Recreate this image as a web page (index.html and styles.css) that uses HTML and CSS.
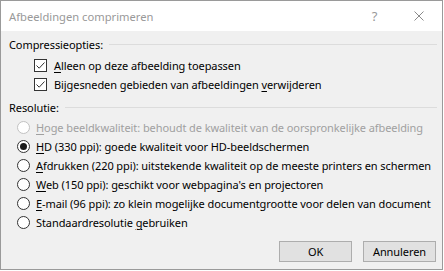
FILE: index.html
```html
<!DOCTYPE html>
<html lang="nl">
<head>
    <meta charset="UTF-8">
    <title>Afbeeldingen comprimeren</title>
    <link rel="stylesheet" href="styles.css">
</head>
<body>
    <div class="window">
        <div class="titlebar">
            <span class="title">Afbeeldingen comprimeren</span>
            <span class="caption-btn help">?</span>
            <span class="caption-btn close">
                <svg width="10" height="10" viewBox="0 0 10 10">
                    <path d="M0.5 0.5 L9.5 9.5 M9.5 0.5 L0.5 9.5" stroke="#8a8a8a" stroke-width="1" fill="none"/>
                </svg>
            </span>
        </div>

        <div class="content">
            <!-- Compressieopties -->
            <div class="group-header">
                <span>Compressieopties:</span>
                <span class="group-line"></span>
            </div>
            <div class="check-row first">
                <span class="checkbox">
                    <svg width="11" height="11" viewBox="0 0 11 11">
                        <path d="M1.5 5.5 L4.2 8.2 L9.5 2.5" stroke="#333" stroke-width="1" fill="none"/>
                    </svg>
                </span>
                <span><u>A</u>lleen op deze afbeelding toepassen</span>
            </div>
            <div class="check-row">
                <span class="checkbox">
                    <svg width="11" height="11" viewBox="0 0 11 11">
                        <path d="M1.5 5.5 L4.2 8.2 L9.5 2.5" stroke="#333" stroke-width="1" fill="none"/>
                    </svg>
                </span>
                <span>Bijgesneden gebieden van afbeeldingen <u>v</u>erwijderen</span>
            </div>

            <!-- Resolutie -->
            <div class="group-header second">
                <span>Resolutie:</span>
                <span class="group-line"></span>
            </div>
            <div class="radio-row first disabled">
                <span class="radio"></span>
                <span><u>H</u>oge beeldkwaliteit: behoudt de kwaliteit van de oorspronkelijke afbeelding</span>
            </div>
            <div class="radio-row">
                <span class="radio checked"></span>
                <span><u>H</u>D (330 ppi): goede kwaliteit voor HD-beeldschermen</span>
            </div>
            <div class="radio-row">
                <span class="radio"></span>
                <span><u>A</u>fdrukken (220 ppi): uitstekende kwaliteit op de meeste printers en schermen</span>
            </div>
            <div class="radio-row">
                <span class="radio"></span>
                <span><u>W</u>eb (150 ppi): geschikt voor webpagina's en projectoren</span>
            </div>
            <div class="radio-row">
                <span class="radio"></span>
                <span><u>E</u>-mail (96 ppi): zo klein mogelijke documentgrootte voor delen van document</span>
            </div>
            <div class="radio-row">
                <span class="radio"></span>
                <span>Standaardresolutie <u>g</u>ebruiken</span>
            </div>

            <div class="buttons">
                <button>OK</button>
                <button>Annuleren</button>
            </div>
        </div>
    </div>
</body>
</html>
```
FILE: styles.css
```css
/* Algemeen */
body {
    margin: 0;
    background: #ffffff;
    font-family: "Noto Sans", sans-serif;
    font-size: 11px;
    letter-spacing: -0.08px;
    color: #000;
}

/* Venster */
.window {
    width: 443px;
    height: 270px;
    box-sizing: border-box;
    border: 1px solid #9a9a9a;
    display: flex;
    flex-direction: column;
}

/* Titelbalk */
.titlebar {
    height: 30px;
    background: #ffffff;
    display: flex;
    align-items: center;
}

.title {
    flex: 1;
    padding-left: 8px;
    color: #999999;
    font-size: 11.2px;
    letter-spacing: 0;
    white-space: nowrap;
}

.caption-btn {
    width: 46px;
    height: 30px;
    display: flex;
    align-items: center;
    justify-content: center;
    color: #999999;
    flex-shrink: 0;
}

.help {
    font-size: 13px;
    padding-left: 3px;
    box-sizing: border-box;
}

/* Inhoud */
.content {
    flex: 1;
    background: #f0f0f0;
    padding: 4px 6px 7px 8px;
    display: flex;
    flex-direction: column;
}

.group-header {
    height: 19px;
    display: flex;
    align-items: center;
    white-space: nowrap;
}

.group-header.second {
    margin-top: 4px;
}

.group-line {
    flex: 1;
    height: 1px;
    background: #dcdcdc;
    margin-left: 6px;
    margin-right: -1px;
}

/* Selectievakjes */
.check-row {
    height: 19px;
    display: flex;
    align-items: center;
    padding-left: 25px;
    white-space: nowrap;
}

.check-row.first {
    margin-top: 2px;
}

.checkbox {
    width: 13px;
    height: 13px;
    flex-shrink: 0;
    box-sizing: border-box;
    border: 1px solid #333;
    background: #fff;
    margin-right: 7px;
    display: flex;
}

/* Keuzerondjes */
.radio-row {
    height: 19px;
    display: flex;
    align-items: center;
    padding-left: 8px;
    white-space: nowrap;
}

.radio-row.first {
    margin-top: 1px;
}

.radio {
    width: 13px;
    height: 13px;
    flex-shrink: 0;
    box-sizing: border-box;
    border: 1px solid #333;
    border-radius: 50%;
    background: #fff;
    margin-right: 6px;
    display: flex;
    align-items: center;
    justify-content: center;
}

.radio.checked::after {
    content: "";
    width: 7px;
    height: 7px;
    border-radius: 50%;
    background: #1a1a1a;
}

.radio-row.disabled {
    color: #a0a0a0;
}

.radio-row.disabled .radio {
    border-color: #c2c2c2;
}

u {
    text-decoration-thickness: 1px;
    text-underline-offset: 2px;
}

/* Knoppen */
.buttons {
    margin-top: auto;
    display: flex;
    justify-content: flex-end;
    gap: 11px;
}

button {
    width: 73px;
    height: 21px;
    background: #e1e1e1;
    border: 1px solid #adadad;
    font-family: inherit;
    font-size: inherit;
    letter-spacing: inherit;
    color: #000;
    padding: 0;
}
```
